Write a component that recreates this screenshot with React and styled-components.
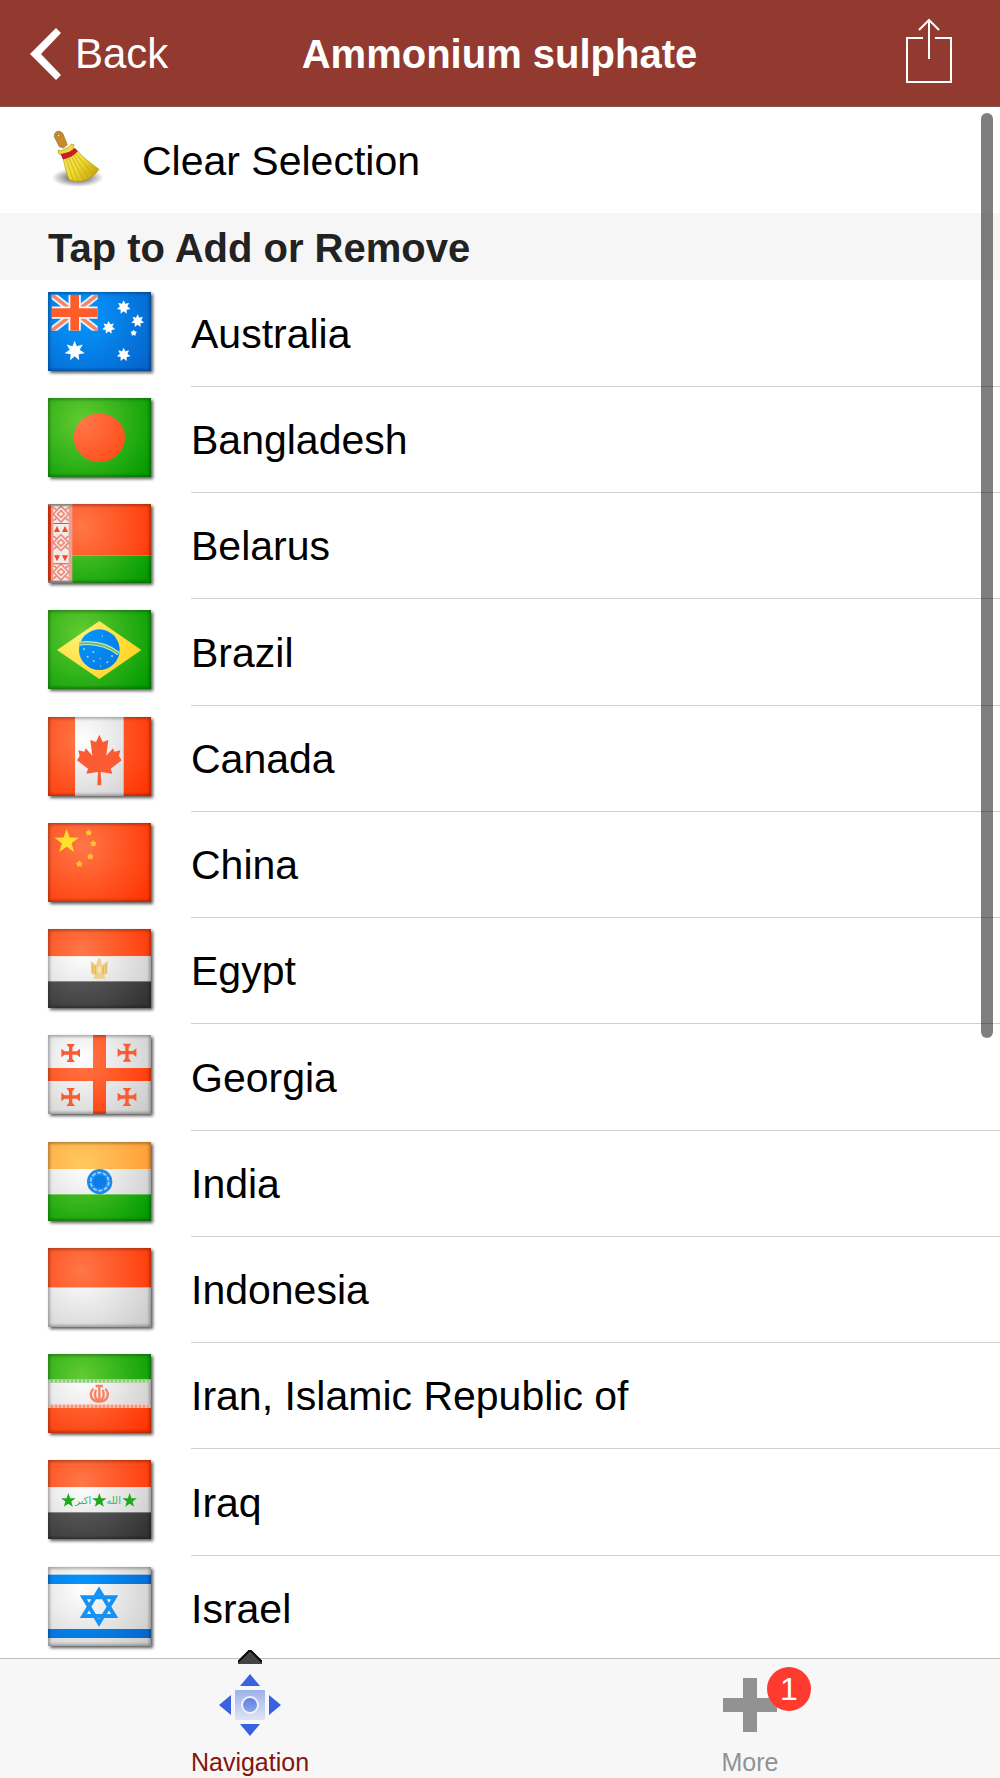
import React from "react";
import styled, { createGlobalStyle } from "styled-components";

const colors = {
  header: "#923a30",
  section: "#f6f6f6",
  tabBar: "#f7f7f7",
  separator: "#d0d0d3",
  activeTab: "#82160c",
  inactiveTab: "#929292",
  badge: "#ff3b30",
};

/* Drawing helpers */

const starPoints = (cx, cy, r, points = 5, inner = 0.4) => {
  const list = [];
  for (let i = 0; i < points * 2; i++) {
    const radius = i % 2 ? r * inner : r;
    const angle = (Math.PI * i) / points - Math.PI / 2;
    list.push(
      `${(cx + radius * Math.cos(angle)).toFixed(1)},${(cy + radius * Math.sin(angle)).toFixed(1)}`
    );
  }
  return list.join(" ");
};

const Star = ({ x, y, r, points, inner, fill }) => (
  <polygon points={starPoints(x, y, r, points, inner)} fill={fill} />
);

const gradients = {
  red: ["#ff7748", "#ff3502"],
  green: ["#63cb32", "#039b02"],
  blue: ["#0598ff", "#0565cc"],
  white: ["#ffffff", "#cccccc"],
  black: ["#666666", "#333333"],
  orange: ["#ffc95f", "#ff9833"],
  yellow: ["#fff27a", "#ffc800"],
};

/* Shared by every flag: all of them use the same 309 x 237 box */
const FlagDefs = () => (
  <HiddenSvg width="0" height="0" aria-hidden="true">
    <defs>
      {Object.entries(gradients).map(([name, [from, to]]) => (
        <radialGradient
          key={name}
          id={name}
          gradientUnits="userSpaceOnUse"
          cx="102"
          cy="70"
          r="245"
        >
          <stop offset="0" stopColor={from} />
          <stop offset="1" stopColor={to} />
        </radialGradient>
      ))}
      <filter id="edge">
        <feGaussianBlur stdDeviation="4" />
      </filter>
    </defs>
  </HiddenSvg>
);

const Stripes = ({ top, middle, bottom }) => (
  <>
    <rect width="309" height="82" fill={`url(#${top})`} />
    <rect y="82" width="309" height="75" fill={`url(#${middle})`} />
    <rect y="157" width="309" height="80" fill={`url(#${bottom})`} />
  </>
);

const Australia = () => (
  <>
    <rect width="309" height="237" fill="url(#blue)" />
    <svg x="11" y="8" width="138" height="108" viewBox="0 0 138 108">
      <path d="M0 0L138 108M138 0L0 108" stroke="#e4eefb" strokeWidth="22" />
      <path d="M0 0L138 108M138 0L0 108" stroke="#f98260" strokeWidth="10" />
      <path d="M69 0V108M0 54H138" stroke="#f4f4fa" strokeWidth="37" />
      <path d="M69 0V108M0 54H138" stroke="#ff5c2c" strokeWidth="26" />
    </svg>
    <Star x={227} y={46} r={21} points={7} inner={0.55} fill="#fff" />
    <Star x={269} y={87} r={20} points={7} inner={0.55} fill="#fff" />
    <Star x={182} y={107} r={20} points={7} inner={0.55} fill="#fff" />
    <Star x={257} y={123} r={10} inner={0.6} fill="#fff" />
    <Star x={80} y={177} r={31} points={7} inner={0.5} fill="#fff" />
    <Star x={227} y={188} r={21} points={7} inner={0.55} fill="#fff" />
  </>
);

const Bangladesh = () => (
  <>
    <rect width="309" height="237" fill="url(#green)" />
    <ellipse cx="154" cy="119" rx="77" ry="73" fill="url(#red)" />
  </>
);

const Belarus = () => (
  <>
    <rect width="309" height="155" fill="url(#red)" />
    <rect y="155" width="309" height="82" fill="url(#green)" />
    <rect width="73" height="237" fill="#e9a092" />
    <rect width="9" height="237" fill="#f03a18" />
    <rect x="16" y="5" width="46" height="226" fill="#f2ebe9" />
    {[30, 116, 204].map((y) => (
      <g key={y} stroke="#f08a78" strokeWidth="5" fill="none">
        <path d={`M39 ${y - 24}L62 ${y}L39 ${y + 24}L16 ${y}Z`} />
        <path d={`M39 ${y - 10}L49 ${y}L39 ${y + 10}L29 ${y}Z`} />
        <path d={`M16 ${y - 20}l10 8M62 ${y - 20}l-10 8M16 ${y + 20}l10 -8M62 ${y + 20}l-10 -8`} />
      </g>
    ))}
    <path
      d="M18 84L27 66L36 84ZM42 84L51 66L60 84ZM18 154L27 172L36 154ZM42 154L51 172L60 154ZM16 57H62V60H16ZM16 178H62V181H16Z"
      fill="#f4482a"
    />
    <rect width="73" height="5" fill="#b9b0ae" />
    <rect y="230" width="73" height="7" fill="#aaa19f" />
  </>
);

const Brazil = () => (
  <>
    <rect width="309" height="237" fill="url(#green)" />
    <path d="M27 120L154 33L280 120L154 207Z" fill="url(#yellow)" />
    <circle cx="154" cy="119" r="61" fill="url(#blue)" />
    <path d="M94 101Q160 92 212 131" fill="none" stroke="#c4e6d8" strokeWidth="12" />
    <path d="M94 101Q160 92 212 131" fill="none" stroke="#6cbd4c" strokeWidth="5" />
    <g fill="#a9d5fb">
      <circle cx="108" cy="117" r="3" />
      <circle cx="119" cy="140" r="3" />
      <circle cx="136" cy="126" r="3" />
      <circle cx="137" cy="153" r="3" />
      <circle cx="157" cy="146" r="2" />
      <circle cx="158" cy="168" r="2" />
      <circle cx="178" cy="157" r="3" />
      <circle cx="192" cy="138" r="3" />
      <circle cx="163" cy="78" r="2" />
    </g>
  </>
);

const Canada = () => (
  <>
    <rect width="309" height="237" fill="url(#red)" />
    <rect x="81" width="146" height="237" fill="url(#white)" />
    <path
      d="M154 53L164 75L181 69L175 116L195 94L199 104L217 100L213 117L221 130L188 155L193 170L158 165L160 205H148L150 165L115 170L120 155L87 130L95 117L91 100L109 104L113 94L133 116L127 69L144 75Z"
      fill="#fb5b32"
    />
  </>
);

const China = () => (
  <>
    <rect width="309" height="237" fill="url(#red)" />
    <Star x={56} y={56} r={38} fill="#ffe02e" />
    <Star x={122} y={29} r={10} inner={0.7} fill="#ffc42e" />
    <Star x={136} y={62} r={10} inner={0.7} fill="#ffc42e" />
    <Star x={127} y={101} r={10} inner={0.7} fill="#ffc42e" />
    <Star x={94} y={123} r={10} inner={0.7} fill="#ffc42e" />
  </>
);

const Egypt = () => (
  <>
    <Stripes top="red" middle="white" bottom="black" />
    <path
      d="M128 96L144 108L150 90L158 88L161 108L180 96L178 134L168 140L174 149H135L141 140L130 134Z"
      fill="#efd08a"
    />
    <path
      d="M134 104V132M141 110L143 136M174 104V132M167 110L165 136"
      stroke="#e3b758"
      strokeWidth="4"
      fill="none"
    />
    <path d="M149 113H159V128L154 134L149 128Z" fill="#f6e7b8" />
  </>
);

const Georgia = () => (
  <>
    <rect width="309" height="237" fill="url(#white)" />
    <path d="M135 0H174V99H309V138H174V237H135V138H0V99H135Z" fill="url(#red)" />
    {[
      [68, 54],
      [237, 53],
      [68, 186],
      [237, 186],
    ].map(([x, y]) => (
      <path
        key={`${x}-${y}`}
        transform={`translate(${x} ${y})`}
        d="M-13 -27H13L5 -17V-5H18L28 -13V13L18 5H5V17L13 27H-13L-5 17V5H-18L-28 13V-13L-18 -5H-5V-17Z"
        fill="#fb5a32"
      />
    ))}
  </>
);

const India = () => (
  <>
    <Stripes top="orange" middle="white" bottom="green" />
    <circle cx="155" cy="119" r="38" fill="#1a8bf0" />
    <circle
      cx="155"
      cy="119"
      r="27"
      fill="none"
      stroke="#a9d5fb"
      strokeWidth="5"
      strokeDasharray="12 5"
    />
    <circle cx="155" cy="119" r="19" fill="#0b7ce8" />
  </>
);

const Indonesia = () => (
  <>
    <rect width="309" height="119" fill="url(#red)" />
    <rect y="119" width="309" height="118" fill="url(#white)" />
  </>
);

const Iran = () => (
  <>
    <Stripes top="green" middle="white" bottom="red" />
    <rect y="76" width="309" height="10" fill="#cfe6c6" />
    <path d="M8 81H301" stroke="#8ccb78" strokeWidth="10" strokeDasharray="8 4" />
    <rect y="151" width="309" height="11" fill="#f5d3ca" />
    <path d="M8 157H301" stroke="#f7937b" strokeWidth="10" strokeDasharray="8 4" />
    <rect y="162" width="309" height="5" fill="url(#red)" />
    <g fill="none" stroke="#fb7f60" strokeWidth="7">
      <path d="M136 104C122 120 128 142 154 143C180 142 186 120 172 104" />
      <path d="M144 108C137 122 142 136 152 140M164 108C171 122 166 136 156 140" />
      <path d="M154 98V142M143 96H165" />
    </g>
  </>
);

const Iraq = () => (
  <>
    <Stripes top="red" middle="white" bottom="black" />
    <Star x={61} y={122} r={23} fill="#22a81c" />
    <Star x={154} y={122} r={23} fill="#22a81c" />
    <Star x={245} y={122} r={23} fill="#22a81c" />
    <FlagScript x="106" y="132">
      اكبر
    </FlagScript>
    <FlagScript x="197" y="132">
      الله
    </FlagScript>
  </>
);

const Israel = () => (
  <>
    <rect width="309" height="237" fill="url(#white)" />
    <rect y="23" width="309" height="28" fill="url(#blue)" />
    <rect y="186" width="309" height="27" fill="url(#blue)" />
    <path
      d="M153 70L200 147H106ZM153 168L200 91H106Z"
      fill="none"
      stroke="#1592f6"
      strokeWidth="12"
    />
  </>
);

const FlagIcon = ({ children }) => (
  <FlagSvg viewBox="0 0 309 237" preserveAspectRatio="none" aria-hidden="true">
    {children}
    <rect
      width="309"
      height="237"
      fill="none"
      stroke="#000"
      strokeOpacity="0.4"
      strokeWidth="8"
      filter="url(#edge)"
    />
  </FlagSvg>
);

const BroomIcon = () => (
  <BroomSvg viewBox="0 0 156 186" aria-hidden="true">
    <defs>
      <radialGradient id="broomShadow">
        <stop offset="0.2" stopColor="#000" stopOpacity="0.6" />
        <stop offset="1" stopColor="#000" stopOpacity="0" />
      </radialGradient>
      <linearGradient id="bristles" x1="0" y1="0" x2="1" y2="0.6">
        <stop offset="0" stopColor="#f4e664" />
        <stop offset="0.5" stopColor="#f0dc30" />
        <stop offset="1" stopColor="#c8a60c" />
      </linearGradient>
    </defs>
    <ellipse cx="77" cy="143" rx="78" ry="28" fill="url(#broomShadow)" />
    <path
      d="M7 20C5 3 24 -1 32 10L46 44L34 54L22 50Z"
      fill="#c98a2c"
      stroke="#9a6a20"
      strokeWidth="2"
    />
    <circle cx="20" cy="17" r="4" fill="#fff3d6" stroke="#7a4a0c" strokeWidth="2" />
    <path
      d="M34 86C38 108 44 134 52 149C78 162 118 152 141 118C118 100 92 82 76 62Z"
      fill="url(#bristles)"
      stroke="#b3930a"
      strokeWidth="2"
    />
    <path
      d="M42 86L64 152M50 82L78 152M58 78L94 148M64 74L108 142M70 70L123 132"
      stroke="#c2a21a"
      strokeWidth="2"
      fill="none"
    />
    <path
      d="M18 60Q26 66 36 58Q50 54 58 42L66 44L63 56L70 60Q54 76 32 82L28 74L21 72Z"
      fill="#ecd84a"
      stroke="#b3930a"
      strokeWidth="2"
    />
    <path d="M28 73Q54 70 69 55L76 64Q60 82 33 87Z" fill="#d31a22" stroke="#970c12" strokeWidth="2" />
  </BroomSvg>
);

const countries = [
  { name: "Australia", Flag: Australia },
  { name: "Bangladesh", Flag: Bangladesh },
  { name: "Belarus", Flag: Belarus },
  { name: "Brazil", Flag: Brazil },
  { name: "Canada", Flag: Canada },
  { name: "China", Flag: China },
  { name: "Egypt", Flag: Egypt },
  { name: "Georgia", Flag: Georgia },
  { name: "India", Flag: India },
  { name: "Indonesia", Flag: Indonesia },
  { name: "Iran, Islamic Republic of", Flag: Iran },
  { name: "Iraq", Flag: Iraq },
  { name: "Israel", Flag: Israel },
];

export default function App() {
  return (
    <Screen>
      <GlobalStyle />
      <FlagDefs />

      <Header>
        <BackLink href="#back">
          <svg width="32" height="52" viewBox="0 0 32 52" aria-hidden="true">
            <path d="M26 0L31 5L11 26L31 47L26 52L0 26Z" fill="#fff" />
          </svg>
          Back
        </BackLink>
        <Title>Ammonium sulphate</Title>
        <ShareButton type="button" aria-label="Share">
          <svg width="48" height="66" viewBox="0 0 48 66" aria-hidden="true">
            <path
              d="M18 20H2V64H46V20H30M24 2V41M14 12L24 2L34 12"
              fill="none"
              stroke="#fff"
              strokeWidth="2"
            />
          </svg>
        </ShareButton>
      </Header>

      <ScrollArea>
        <Content>
          <ClearButton type="button">
            <BroomIcon />
            Clear Selection
          </ClearButton>
          <SectionTitle>Tap to Add or Remove</SectionTitle>
          <CountryList>
            {countries.map(({ name, Flag }) => (
              <CountryItem key={name}>
                <CountryButton type="button">
                  <FlagIcon>
                    <Flag />
                  </FlagIcon>
                  <CountryName>{name}</CountryName>
                </CountryButton>
              </CountryItem>
            ))}
          </CountryList>
        </Content>
        <ScrollThumb />
      </ScrollArea>

      <TabBar>
        <Tab href="#navigation" $active aria-current="page">
          <TabMarker width="24" height="14" viewBox="0 0 24 14" aria-hidden="true">
            <path d="M0 14V11L11 0H13L24 11V14Z" fill="#444" />
            <path d="M0 12L11 1H13L24 12" fill="none" stroke="#0c0c0c" strokeWidth="2" />
          </TabMarker>
          <TabIcon>
            <svg width="62" height="62" viewBox="0 0 62 62" aria-hidden="true">
              <defs>
                <linearGradient id="pad" x1="0" y1="0" x2="0" y2="1">
                  <stop offset="0" stopColor="#9db1ea" />
                  <stop offset="1" stopColor="#dfe5f6" />
                </linearGradient>
                <linearGradient id="padDot" x1="0" y1="0" x2="0" y2="1">
                  <stop offset="0" stopColor="#5d7ee3" />
                  <stop offset="1" stopColor="#8ea6ea" />
                </linearGradient>
              </defs>
              <path
                d="M31 0L41 12H21ZM31 62L41 50H21ZM0 31L12 21V41ZM62 31L50 21V41Z"
                fill="#3862e0"
              />
              <rect x="16" y="16" width="30" height="30" rx="1" fill="url(#pad)" />
              <circle cx="31" cy="31" r="8" fill="url(#padDot)" stroke="#eef2fd" strokeWidth="2" />
            </svg>
          </TabIcon>
          Navigation
        </Tab>
        <Tab href="#more">
          <TabIcon>
            <svg width="54" height="54" viewBox="0 0 54 54" aria-hidden="true">
              <path d="M20 0H34V20H54V34H34V54H20V34H0V20H20Z" fill={colors.inactiveTab} />
            </svg>
            <Badge>1</Badge>
          </TabIcon>
          More
        </Tab>
      </TabBar>
    </Screen>
  );
}

const GlobalStyle = createGlobalStyle`
  * {
    box-sizing: border-box;
  }

  body {
    margin: 0;
    background: white;
    font-family: "Liberation Sans", Arial, sans-serif;
  }

  button {
    border: none;
    padding: 0;
    background: none;
    font: inherit;
    color: inherit;
    text-align: left;
    cursor: pointer;
  }

  svg {
    display: block;
    flex-shrink: 0;
  }
`;

const Screen = styled.div`
  display: flex;
  flex-direction: column;
  height: 100vh;
  font-size: 41px;
  color: black;
`;

const HiddenSvg = styled.svg`
  position: absolute;
`;

const Header = styled.header`
  display: grid;
  grid-template-columns: 1fr auto 1fr;
  align-items: center;
  flex-shrink: 0;
  height: 107px;
  padding: 0 47px 0 30px;
  border-bottom: 1px solid #86544d;
  background: ${colors.header};
  color: white;
`;

const BackLink = styled.a`
  display: flex;
  align-items: center;
  gap: 13px;
  padding-top: 2px;
  font-size: 42px;
  color: white;
  text-decoration: none;
`;

const Title = styled.h1`
  margin: 0;
  padding: 2px 0 0 16px;
  font-size: 40px;
  font-weight: 700;
`;

const ShareButton = styled.button`
  justify-self: end;
  padding-bottom: 4px;
`;

const ScrollArea = styled.main`
  position: relative;
  flex: 1;
  min-height: 0;
`;

const Content = styled.div`
  height: 100%;
  overflow-y: auto;
  scrollbar-width: none;
`;

const ScrollThumb = styled.div`
  position: absolute;
  top: 6px;
  right: 7px;
  bottom: 40%;
  width: 12px;
  border-radius: 6px;
  background: rgba(0, 0, 0, 0.5);
`;

const ClearButton = styled.button`
  display: flex;
  align-items: center;
  gap: 38px;
  width: 100%;
  height: 106px;
  padding: 2px 52px 0;
`;

const BroomSvg = styled.svg`
  width: 52px;
  height: 62px;
`;

const SectionTitle = styled.h2`
  display: flex;
  align-items: center;
  height: 67px;
  margin: 0;
  padding: 4px 48px 0;
  background: ${colors.section};
  font-size: 40px;
  font-weight: 700;
  color: #222;
`;

const CountryList = styled.ul`
  display: grid;
  grid-auto-rows: 106px 106px 106px 107px;
  margin: 0;
  padding: 0;
  list-style: none;
`;

const CountryName = styled.span`
  display: flex;
  align-items: center;
  flex: 1;
  padding-top: 2px;
  border-top: 1px solid ${colors.separator};
`;

const CountryItem = styled.li`
  display: flex;

  &:first-child ${CountryName} {
    border-top-color: transparent;
  }
`;

const CountryButton = styled.button`
  display: flex;
  gap: 40px;
  flex: 1;
  padding-left: 48px;
`;

const FlagSvg = styled.svg`
  width: 103px;
  height: 79px;
  margin-top: 12px;
  box-shadow: 2px 2px 3px rgba(0, 0, 0, 0.65);
`;

const FlagScript = styled.text`
  font-family: "DejaVu Sans", sans-serif;
  font-size: 30px;
  fill: #3fae6c;
  text-anchor: middle;
`;

const TabBar = styled.nav`
  position: relative;
  display: flex;
  flex-shrink: 0;
  height: 120px;
  border-top: 1px solid #bfbfc0;
  background: ${colors.tabBar};
`;

const Tab = styled.a`
  position: relative;
  display: flex;
  flex: 1;
  flex-direction: column;
  align-items: center;
  gap: 9px;
  padding-top: 14px;
  font-size: 25px;
  line-height: 32px;
  color: ${({ $active }) => ($active ? colors.activeTab : colors.inactiveTab)};
  text-decoration: none;
`;

const TabMarker = styled.svg`
  position: absolute;
  top: -9px;
`;

const TabIcon = styled.span`
  position: relative;
  display: flex;
  align-items: center;
  height: 64px;
`;

const Badge = styled.span`
  position: absolute;
  top: -6px;
  left: 44px;
  width: 44px;
  border-radius: 22px;
  background: ${colors.badge};
  color: white;
  font-size: 32px;
  line-height: 44px;
  text-align: center;
`;
